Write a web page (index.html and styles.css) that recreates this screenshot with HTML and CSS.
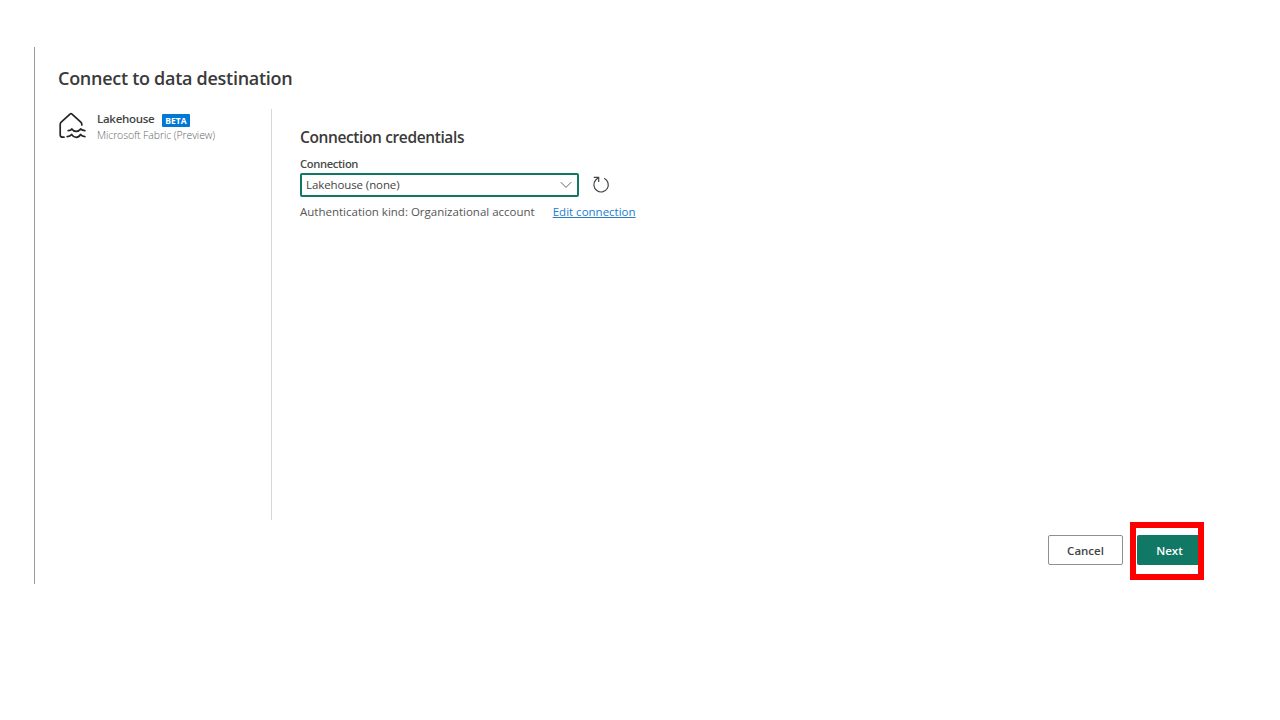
FILE: index.html
```
<!DOCTYPE html>
<html lang="en">
<head>
<meta charset="utf-8">
<title>Connect to data destination</title>
<link rel="stylesheet" href="styles.css">
</head>
<body>
<main class="dialog">
  <h1 class="title"><span>Connect to data destination</span></h1>
  <div class="content">
    <aside class="source">
      <svg class="lake-icon" width="30" height="30" viewBox="0 0 30 30" fill="none" stroke="#242424" stroke-width="1.7" stroke-linecap="round" stroke-linejoin="round">
        <path d="M6 25.2H4.6Q2.2 25.2 2.2 22.8V12.3Q2.2 11.1 3.2 10.2L12 2.1Q13 1.3 14 2.1L22.8 10.2Q23.8 11.1 23.8 12.3V13"/>
        <path d="M10.2 18.6Q12.6 18.6 13.8 16.9Q15.6 19.4 18.2 19.4T22.6 16.9Q24.2 18.6 26.9 18.6"/>
        <path d="M9.2 24.6Q12 24.6 13.6 22.5Q15.6 25.4 18.2 25.4T22.6 22.5Q24.2 24.6 26.9 24.6"/>
      </svg>
      <div class="source-text">
        <div class="source-head"><span class="source-name">Lakehouse</span><span class="badge">BETA</span></div>
        <div class="source-kind"><span>Microsoft Fabric (Preview)</span></div>
      </div>
    </aside>
    <section class="credentials">
      <h2 class="subtitle"><span>Connection credentials</span></h2>
      <div class="label"><span>Connection</span></div>
      <div class="row">
        <div class="select">
          <span class="select-value">Lakehouse (none)</span>
          <svg width="12" height="8" viewBox="0 0 12 8" fill="none" stroke="#666" stroke-width="1"><path d="M.8 1.2L6 6.4l5.2-5.2"/></svg>
        </div>
        <svg class="refresh" width="18" height="18" viewBox="0 0 18 18" fill="none" stroke="#444" stroke-width="1.2"><path d="M12.2 2.3A7.2 7.2 0 1 1 3.7 4L6.7 1.4M1.8 1.4H6.7V6.1"/></svg>
      </div>
      <div class="auth"><span class="auth-kind">Authentication kind: Organizational account</span><a class="edit" href="#">Edit connection</a></div>
    </section>
  </div>
  <footer class="actions">
    <button class="button cancel"><span>Cancel</span></button>
    <div class="highlight"><button class="button next"><span>Next</span></button></div>
  </footer>
</main>
</body>
</html>
```
FILE: styles.css
```
* { box-sizing: border-box; }
body { margin: 0; background: #fff; color: #3a3a3a; font-family: "Open Sans", "Noto Sans", sans-serif; font-size: 11.5px; white-space: nowrap; }
h1, h2 { margin: 0; }
.dialog { margin: 47px 0 0 34px; width: 1190px; height: 537px; border-left: 1px solid #9b9b9b; padding-left: 23px; display: flex; flex-direction: column; }
.title { height: 62px; line-height: 62px; font-size: 18px; font-weight: 600; letter-spacing: -.28px; }
.content { display: flex; height: 411px; }
.source { width: 214px; border-right: 1px solid #d6d6d6; display: flex; gap: 9px; }
.lake-icon { margin-top: 3px; flex: none; }
.source-text { padding-top: 1px; }
.source-head { display: flex; height: 18px; align-items: center; gap: 8px; font-weight: 600; line-height: 18px; color: #444; }
.source-name { width: 57px; letter-spacing: -.28px; }
.badge { width: 28px; height: 13px; margin-top: 3px; background: #0078d4; color: #fff; border-radius: 1px; font-size: 8.5px; font-weight: 700; line-height: 13px; text-align: center; }
.source-kind { line-height: 15px; font-size: 10.5px; font-weight: 300; letter-spacing: -.1px; color: #666; }
.credentials { padding: 17px 0 0 28px; }
.subtitle { height: 24px; line-height: 22px; font-size: 15.5px; font-weight: 600; letter-spacing: -.38px; }
.label { height: 23px; line-height: 28px; font-size: 11.2px; font-weight: 600; letter-spacing: -.35px; color: #4a4a4a; }
.row { display: flex; align-items: center; gap: 13px; height: 24px; }
.select { width: 279px; height: 24px; border: 2px solid #117865; border-radius: 2px; padding: 0 5px 0 4px; display: flex; align-items: center; justify-content: space-between; color: #444; }
.select-value { line-height: 20px; letter-spacing: -.1px; }
.auth { display: flex; gap: 18px; height: 28px; line-height: 29px; color: #555; }
.edit { color: #2480cc; text-decoration: underline; text-underline-offset: 1px; }
.actions { display: flex; justify-content: flex-end; align-items: flex-start; gap: 7px; padding: 2px 20px 0 0; height: 60px; }
.button { height: 30px; border-radius: 2px; padding: 0; font: 600 11.5px/30px "Open Sans", "Noto Sans", sans-serif; }
.cancel { width: 75px; margin-top: 13px; border: 1px solid #8f8f8f; background: #fff; color: #444; line-height: 30px; }
.highlight { width: 74px; height: 58px; border: 6px solid #f00; padding: 7px 0 0 1px; }
.next { display: block; width: 61px; border: 0; border-radius: 2px 0 0 2px; background: #117865; color: #fff; padding: 1px 0 0 4px; }
```
